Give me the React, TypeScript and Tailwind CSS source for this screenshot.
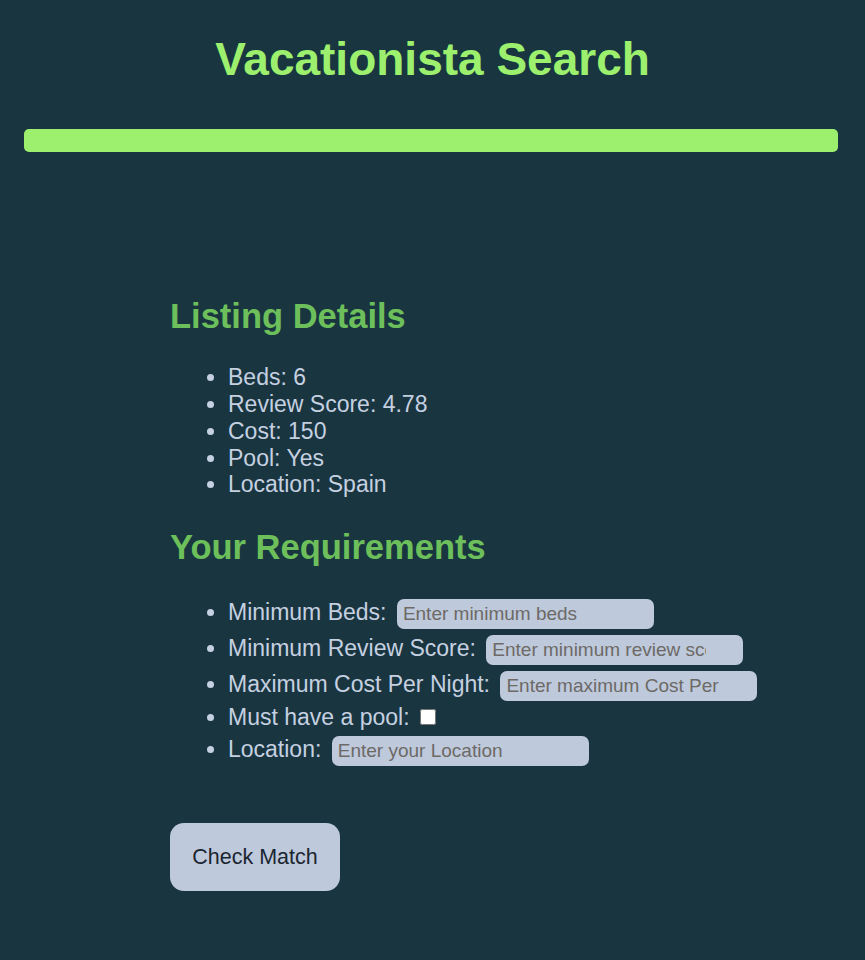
import React, { useState } from 'react';

const listing = [
  { label: 'Beds', value: '6' },
  { label: 'Review Score', value: '4.78' },
  { label: 'Cost', value: '150' },
  { label: 'Pool', value: 'Yes' },
  { label: 'Location', value: 'Spain' },
];

const inputClass =
  'inline-block align-baseline w-[257px] h-[30px] my-[3px] ml-[4px] pl-[6px] pr-[37px] rounded-[7px] bg-[#bec9dc] text-[19px] text-[#1b2530] placeholder:text-[#6d6a66] outline-none border-0';

const App: React.FC = () => {
  const [beds, setBeds] = useState('');
  const [score, setScore] = useState('');
  const [cost, setCost] = useState('');
  const [pool, setPool] = useState(false);
  const [location, setLocation] = useState('');

  return (
    <div
      className="min-h-screen bg-[#193640] pb-10"
      style={{ fontFamily: '"Liberation Sans", Arial, sans-serif' }}
    >
      {/* header */}
      <h1 className="pt-[33px] text-center text-[46px] font-bold leading-[1.149] text-[#9cf06e]">
        Vacationista Search
      </h1>
      <div className="mt-[43px] ml-6 mr-[27px] h-[23px] rounded-[5px] bg-[#9cf06e]" />

      <div className="pl-[170px] text-[#c5d0e1]">
        <h2 className="mt-[145px] text-[34.5px] font-bold leading-[1.149] text-[#6cbf5a]">
          Listing Details
        </h2>
        <ul className="mt-[28px] list-disc pl-[58px] text-[23px] leading-[26.7px]">
          {listing.map((row) => (
            <li key={row.label}>
              {row.label}: {row.value}
            </li>
          ))}
        </ul>

        <h2 className="mt-[30px] text-[34.5px] font-bold leading-[1.149] text-[#6cbf5a]">
          Your Requirements
        </h2>
        <ul className="mt-[28px] list-disc pl-[58px] text-[23px] leading-[1.149]">
          <li>
            Minimum Beds:{' '}
            <input
              type="text"
              className={inputClass}
              placeholder="Enter minimum beds"
              value={beds}
              onChange={(e) => setBeds(e.target.value)}
            />
          </li>
          <li>
            Minimum Review Score:{' '}
            <input
              type="text"
              className={inputClass}
              placeholder="Enter minimum review score"
              value={score}
              onChange={(e) => setScore(e.target.value)}
            />
          </li>
          <li>
            Maximum Cost Per Night:{' '}
            <input
              type="text"
              className={inputClass}
              placeholder="Enter maximum Cost Per Night"
              value={cost}
              onChange={(e) => setCost(e.target.value)}
            />
          </li>
          <li className="mb-[3px]">
            Must have a pool:{' '}
            <input
              type="checkbox"
              className="ml-[4px] h-[16px] w-[16px] align-baseline"
              checked={pool}
              onChange={(e) => setPool(e.target.checked)}
            />
          </li>
          <li>
            Location:{' '}
            <input
              type="text"
              className={inputClass}
              placeholder="Enter your Location"
              value={location}
              onChange={(e) => setLocation(e.target.value)}
            />
          </li>
        </ul>

        <button className="mt-[54px] h-[68px] w-[170px] rounded-[14px] bg-[#bec9dc] text-[21.5px] text-[#1b2530]">
          Check Match
        </button>
      </div>
    </div>
  );
};

export default App;
